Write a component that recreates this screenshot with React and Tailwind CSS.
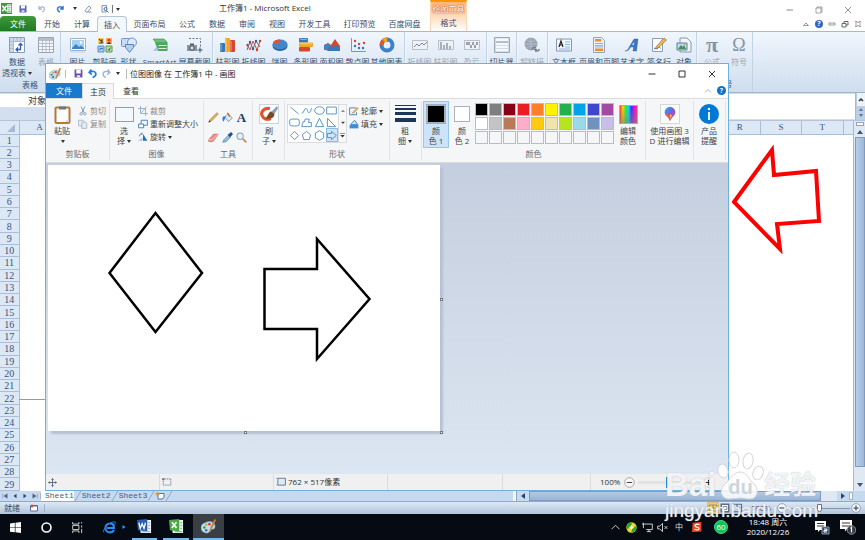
import React from 'react';

const rows = Array.from({ length: 29 }, (_, i) => i + 1);

const excelTabs = [
  { name: '开始', width: 'w-[30px]' },
  { name: '计算', width: 'w-[30px]' },
  { name: '插入', width: 'w-[30px]', active: true },
  { name: '页面布局', width: 'w-[45px]' },
  { name: '公式', width: 'w-[30px]' },
  { name: '数据', width: 'w-[30px]' },
  { name: '审阅', width: 'w-[30px]' },
  { name: '视图', width: 'w-[30px]' },
  { name: '开发工具', width: 'w-[45px]' },
  { name: '打印预览', width: 'w-[45px]' },
  { name: '百度网盘', width: 'w-[45px]' }
];

const palette = [
  'bg-black', 'bg-[#7f7f7f]', 'bg-[#880015]', 'bg-[#ed1c24]', 'bg-[#ff7f27]',
  'bg-[#fff200]', 'bg-[#22b14c]', 'bg-[#00a2e8]', 'bg-[#3f48cc]', 'bg-[#a349a4]',
  'bg-white', 'bg-[#c3c3c3]', 'bg-[#b97a57]', 'bg-[#ffaec9]', 'bg-[#ffc90e]',
  'bg-[#efe4b0]', 'bg-[#b5e61d]', 'bg-[#99d9ea]', 'bg-[#7092be]', 'bg-[#c8bfe7]',
  'bg-[#f5f6f7]', 'bg-[#f5f6f7]', 'bg-[#f5f6f7]', 'bg-[#f5f6f7]', 'bg-[#f5f6f7]',
  'bg-[#f5f6f7]', 'bg-[#f5f6f7]', 'bg-[#f5f6f7]', 'bg-[#f5f6f7]', 'bg-[#f5f6f7]'
];

const Icon = ({ children, className = 'w-4 h-4', box = '0 0 16 16' }) => (
  <svg viewBox={box} className={`${className} shrink-0`} fill="none" aria-hidden="true">
    {children}
  </svg>
);

const Caret = () => (
  <svg viewBox="0 0 4 3" className="inline-block w-1 h-[3px] ml-0.5 align-middle" aria-hidden="true">
    <path d="M0 0h4L2 3z" fill="#333" />
  </svg>
);

/* ---------- Excel ribbon icons ---------- */

const icons = {
  pivot: (
    <>
      <path d="M.5 .5h15v15H.5z" fill="#fff" stroke="#8a9bb5" />
      <path d="M1 1h14v3H1zM1 4h3v11H1z" fill="#c9d9ee" />
      <path d="M1 4.500h14M4.500 1v14M8 1v3M11.500 1v3M1 8h3M1 11.500h3" stroke="#a9b9d0" />
      <path d="M7 12.500h4.500V7M9 10.500l-2 2 2 2M9.500 8.500l2-2 2 2" stroke="#2f5fae" strokeWidth="1.300" />
    </>
  ),
  table: (
    <>
      <path d="M.5 .5h15v15H.5z" fill="#f6f8fb" stroke="#9aa5b3" />
      <path d="M1 1h14v3H1z" fill="#b4bdc8" />
      <path d="M1 6.500h14M1 9.500h14M1 12.500h14M4.500 1v14M8 1v14M11.500 1v14" stroke="#b4bdc9" />
    </>
  ),
  picture: (
    <>
      <path d="M.5 1.500h15v12H.5z" fill="#fff" stroke="#9fb1c9" />
      <path d="M2 3h12v9H2z" fill="#a5d0f5" />
      <circle cx="11" cy="5.500" r="1.200" fill="#fff" />
      <path d="M2 11l4-4 3 3 2-1.500 3 2.500v1H2z" fill="#3f7fc4" />
      <path d="M.5 15h15" stroke="#c6d2e0" />
    </>
  ),
  clipart: (
    <>
      <path d="M1 1h6v6H1z" fill="#ffd05c" />
      <path d="M2 2l4 4M5 2v4H2" stroke="#5b4a2a" strokeWidth="1.200" />
      <path d="M9 1h6v6H9z" fill="#f9b04a" />
      <circle cx="12" cy="3.200" r="1.400" fill="#d6382c" />
      <path d="M10 7a2 2 0 014 0z" fill="#7b2b1f" />
      <path d="M1 9h6v6H1z" fill="#a7cbf0" stroke="#5b89bd" />
      <path d="M9 9h6v6H9z" fill="#b9dfa0" stroke="#5e9c4a" />
      <path d="M2.500 13l1.500-2 2 1M11 12l1 1.500 1.500-3" stroke="#2e6496" />
    </>
  ),
  shapes: (
    <>
      <rect x=".5" y="1.500" width="9" height="8" rx="1" fill="#c7dcf4" stroke="#6b97cc" />
      <circle cx="11" cy="5.500" r="4.500" fill="#dbe9f8" stroke="#6b97cc" />
      <path d="M4.500 7.500h8v3l-4 5-4-5z" fill="#b4cfee" stroke="#5c88bd" />
    </>
  ),
  smartart: (
    <>
      <path d="M1 2h11l3 3v1H4z" fill="#6bbf6d" stroke="#3f9150" strokeWidth=".6" />
      <path d="M3 5.500h12.500v8.500H6z" fill="#4ea660" />
      <path d="M6.500 8h8v1h-8zM6.500 11h8v1h-8z" fill="#d6efd6" />
      <path d="M1 14l4-5 1 5z" fill="#a8c9e6" />
    </>
  ),
  screenshot: (
    <>
      <path d="M2 1.500h11.500v9" stroke="#69788c" strokeDasharray="2 1.500" />
      <path d="M0 8h10v6H0z" fill="#8d949d" />
      <path d="M3 6.500h4V8H3z" fill="#555d68" />
      <circle cx="5" cy="11" r="2.200" fill="#dce2ea" stroke="#3f4650" />
      <path d="M13 10.500v5M10.500 13h5" stroke="#3e4e63" />
    </>
  ),
  bars: (
    <>
      <rect x="0" y="6" width="5" height="9" rx="1" fill="#3478bd" />
      <rect x="5" y="1" width="5" height="14" rx="1" fill="#f3a51f" />
      <rect x="10" y="3" width="5" height="12" rx="1" fill="#d6482c" />
      <path d="M1 7v7M6 2v12M11 4v10" stroke="#fff" strokeOpacity=".5" />
    </>
  ),
  lines: (
    <>
      <path d="M1 13l3-8 3 7 3-8 4 6" stroke="#3b70ae" />
      <path d="M1 8l3 5 3-9 4 9 3-9" stroke="#d6513b" />
      <g fill="#2c5f9f"><circle cx="4" cy="5" r="1.200" /><circle cx="7" cy="12" r="1.200" /><circle cx="10" cy="4" r="1.200" /></g>
      <g fill="#cf3b23"><circle cx="1.500" cy="8" r="1.200" /><circle cx="11" cy="13" r="1.200" /><circle cx="14" cy="4" r="1.200" /></g>
    </>
  ),
  pie: (
    <>
      <ellipse cx="8" cy="9" rx="7.500" ry="5" fill="#245a9b" />
      <ellipse cx="8" cy="7.500" rx="7.500" ry="5" fill="#4186cb" />
      <path d="M8 7.500L1 5.500C2 3 5.500 2.300 8 2.500z" fill="#e4512e" />
    </>
  ),
  hbars: (
    <>
      <rect x="1" y="1" width="9" height="4.500" rx="1" fill="#3478bd" />
      <rect x="1" y="5.500" width="14" height="4.500" rx="1" fill="#f3a51f" />
      <rect x="1" y="10" width="11" height="4.500" rx="1" fill="#d6482c" />
      <path d="M2 2.300h7M2 6.800h12" stroke="#fff" strokeOpacity=".5" />
    </>
  ),
  area: (
    <>
      <path d="M0 13V8l4-2 3 2 4-6 5 7v5z" fill="#d6482c" />
      <path d="M3 14l3-5 3 1 3-2 4 4v2z" fill="#3478bd" />
      <path d="M0 9l4-3 2 3-3 4H0z" fill="#3f86c9" />
    </>
  ),
  scatter: (
    <>
      <path d="M1.500 1v13.500H16" stroke="#7f94ae" />
      <g fill="#d6482c"><circle cx="5" cy="4" r="1.200" /><circle cx="9" cy="7" r="1.200" /><circle cx="14" cy="6" r="1.200" /></g>
      <g fill="#3470b5"><circle cx="5" cy="9" r="1.200" /><circle cx="9" cy="11" r="1.200" /><circle cx="13" cy="11" r="1.200" /></g>
    </>
  ),
  donut: (
    <>
      <circle cx="8" cy="8" r="5.500" stroke="#3c82c8" strokeWidth="4" />
      <path d="M8 2.500A5.500 5.500 0 002.500 8" stroke="#e2552f" strokeWidth="4" />
      <path d="M8 2.500A5.500 5.500 0 004.500 3.700" stroke="#f3a51f" strokeWidth="4" />
    </>
  ),
  sparkLine: (
    <>
      <path d="M.5 3.500h15v9H.5z" fill="#eef1f5" stroke="#b6bfca" />
      <path d="M2 10l3-3 2 2 3-3 2 2 3-3" stroke="#7c8794" />
    </>
  ),
  sparkCol: (
    <>
      <path d="M.5 3.500h15v9H.5z" fill="#eef1f5" stroke="#b6bfca" />
      <path d="M3 12V5M6 12V8M9 12V6M12 12V9" stroke="#8f99a6" strokeWidth="1.500" />
    </>
  ),
  sparkWin: (
    <>
      <path d="M.5 3.500h15v9H.5z" fill="#eef1f5" stroke="#b6bfca" />
      <path d="M3 8V5M5 8V5M7 11V8M9 8V5M11 11V8M13 8V5" stroke="#7c8794" strokeWidth="1.500" />
    </>
  ),
  slicer: (
    <>
      <path d="M.5 .5h15v15H.5z" fill="#d3dbe6" stroke="#9ca8b8" />
      <path d="M2 1.500h12v3H2zM2 6h12v2H2zM2 9h12v2H2zM2 12h12v2H2z" fill="#f6f8fb" />
      <path d="M2 5h12" stroke="#8b9cb5" />
    </>
  ),
  link: (
    <>
      <circle cx="7" cy="7" r="6.500" fill="#9aa4b3" />
      <path d="M1 7h12M7 1v12M3 3c2 2 6 2 8 0M3 11c2-2 6-2 8 0" stroke="#b7c0cc" strokeWidth=".8" />
      <path d="M8 12.500a2 2 0 012-2h2M15 12a2 2 0 01-2 2h-2M10 12.500h3" stroke="#78828f" strokeWidth="1.500" />
    </>
  ),
  textbox: (
    <>
      <path d="M.5 2h15v12H.5z" fill="#f4f8fd" stroke="#8496b0" />
      <path d="M3 10l2-6 2 6M3.700 8h2.600" stroke="#222" strokeWidth="1.200" />
      <path d="M9 5h5M9 7.500h5M9 10h5M3 12h11" stroke="#8cb0dd" />
    </>
  ),
  header: (
    <>
      <path d="M2.500 .5h8l3 3v12h-11z" fill="#eef3fa" stroke="#93a3b8" />
      <path d="M4 2h6v2.500H4zM4 11.500h8V14H4z" fill="#ee8b2b" />
      <path d="M4 6.500h8M4 8.500h8M4 10h8" stroke="#8cb0dd" />
    </>
  ),
  wordart: (
    <path d="M1 14c2 0 3-1.500 4.500-4.500L10 2h4l-1.500 12H9l.6-4H6.500c-1.500 3-3 4.500-5.500 4zM7.500 8.300H10l.6-4.300z" fill="#3977c6" stroke="#2a5a9f" strokeWidth=".4" />
  ),
  signature: (
    <>
      <path d="M1.500 1.500h10v13h-10z" fill="#f8fafd" stroke="#8f9db0" />
      <path d="M3 12c2-2 2 1 4-1s2 1 3 0" stroke="#5b83bb" />
      <path d="M5 10l8-9 2.500 2L7 11l-2.500 1z" fill="#f0b94d" stroke="#7b5b23" strokeWidth=".6" />
    </>
  ),
  object: (
    <>
      <path d="M4 1h7l4 4v10H4z" fill="#f1f5fa" stroke="#8797ac" />
      <path d="M1 6h10v7H1z" fill="#bcdcf5" stroke="#5a7ca5" />
      <path d="M2 12l3-4 2 2 1-2 2 4z" fill="#44924d" />
      <circle cx="8.500" cy="7.500" r="1" fill="#f0a22b" />
    </>
  )
};

const Tool = ({ icon, label, width, dim }) => (
  <button className={`${width} flex flex-col items-center shrink-0 whitespace-nowrap leading-[11px] ${dim ? 'text-[#9aa4b2]' : 'text-[#38526f]'}`}>
    <Icon>{icons[icon]}</Icon>
    <span className="mt-[3px]">{label}</span>
  </button>
);

const RibbonGroup = ({ width, children }) => (
  <div className={`${width} shrink-0 flex justify-center pt-[5px] border-r border-[#c3d3e6] shadow-[1px_0_0_#f1f7fd]`}>
    {children}
  </div>
);

const ExcelTitle = () => (
  <div className="h-4 flex items-center relative">
    <div className="flex items-center gap-[7px] pl-px pt-px">
      <Icon className="w-[11px] h-[11px]">
        <path d="M0 0h16v16H0z" fill="#3a9a3f" />
        <path d="M9 2h6v12H9z" fill="#fff" />
        <path d="M2 4l6 8M8 4l-6 8" stroke="#fff" strokeWidth="2" />
        <path d="M10 4h4M10 7h4M10 10h4M10 12.500h4" stroke="#3a9a3f" />
      </Icon>
      <Icon className="w-2 h-2">
        <path d="M1 1h14v14H1z" fill="#5660b5" />
        <path d="M4 1h8v6H4z" fill="#fff" />
        <path d="M5 10h6v5H5z" fill="#c8d0ee" />
      </Icon>
      <Icon className="w-2 h-2 ml-1">
        <path d="M3 7c3-5 10-4 10 1 0 3-2 5-5 6M2 2v6h6" stroke="#a8b6cc" strokeWidth="2.500" />
      </Icon>
      <Icon className="w-2 h-2 ml-[3px]">
        <path d="M13 7C10 2 3 3 3 8c0 3 2 5 5 6M14 2v6H8" stroke="#3477cf" strokeWidth="3" />
      </Icon>
      <Caret />
      <Icon className="w-2 h-2">
        <path d="M2 11l8-9 4 4-7 8H4zM7 14h8" stroke="#5b7598" strokeWidth="1.500" />
      </Icon>
      <Icon className="w-2 h-2 ml-0.5">
        <path d="M2 1h9v13H2z" stroke="#60738f" strokeWidth="1.500" />
        <circle cx="9" cy="8" r="3" fill="#fff" stroke="#3a6cae" strokeWidth="2" />
        <path d="M11 11l4 4" stroke="#60738f" strokeWidth="2" />
      </Icon>
      <span className="-ml-1 border-l border-[#777] pl-px leading-[8px]"><Caret /></span>
    </div>
    <h1 className="absolute left-[219px] top-[2px] text-[#333]">工作簿1 - Microsoft Excel</h1>
    <div className="ml-auto flex items-center gap-[21px] pr-[13px] pt-[3px]">
      <button aria-label="最小化"><Icon className="w-2 h-2"><path d="M1 8h13" stroke="#888" strokeWidth="2" /></Icon></button>
      <button aria-label="还原"><Icon className="w-2 h-2"><path d="M2 4h10v10H2zM4 4V2h10v10h-2" stroke="#888" strokeWidth="1.500" /></Icon></button>
      <button aria-label="关闭"><Icon className="w-2 h-2"><path d="M2 2l12 12M14 2L2 14" stroke="#888" strokeWidth="1.800" /></Icon></button>
    </div>
  </div>
);

const ExcelTabs = () => (
  <div className="h-[15px] flex text-[#3b4d66] relative">
    <button className="w-9 rounded-t-sm bg-linear-to-b from-[#3f9a3a] to-[#1d7a25] text-white mr-px">文件</button>
    {excelTabs.map((tab) => (
      <button
        key={tab.name}
        className={`${tab.width} shrink-0 whitespace-nowrap ${tab.active ? 'bg-[#f4f8fd] border border-b-0 border-[#b4c6dc] rounded-t-sm h-4 z-10' : ''}`}
      >
        {tab.name}
      </button>
    ))}
    <div className="absolute left-[430px] -top-4 w-[37px] h-[31px] flex flex-col items-center bg-linear-to-b from-[#ffb878] to-white border-t-2 border-x border-t-[#ff9400] border-x-[#ffd9b5]">
      <span className="leading-[13px] text-white [text-shadow:0_0_1px_#c9531a,0_0_1px_#c9531a,0_0_2px_#d9641f]">绘图工具</span>
      <button className="leading-[16px]">格式</button>
    </div>
    <div className="ml-auto flex items-center gap-[5px] pr-[3px]">
      <button aria-label="折叠功能区"><Icon className="w-2 h-2"><path d="M3 11l5-5 5 5z" stroke="#777" strokeWidth="1.500" /></Icon></button>
      <button aria-label="帮助" className="w-2 h-2 rounded-full bg-[#2f68c0] text-white text-[7px] leading-[8px] font-bold">?</button>
      <button aria-label="最小化"><Icon className="w-2 h-2"><path d="M2 6h12v4H2z" stroke="#777" strokeWidth="1.500" /></Icon></button>
      <button aria-label="还原"><Icon className="w-2 h-2"><path d="M2 7h8v7H2zM6 7V3h8v7h-4" stroke="#666" strokeWidth="2" /></Icon></button>
      <button aria-label="关闭"><Icon className="w-2 h-2"><path d="M2 3h4l2 3 2-3h4M2 13h4l2-3 2 3h4M4 3v10M12 3v10" stroke="#777" strokeWidth="1.300" /></Icon></button>
    </div>
  </div>
);

const ExcelRibbon = () => (
  <div className="h-[62px] flex border-t border-[#a9b9cc] border-b border-b-[#9fb3cb] bg-linear-to-b from-[#f0f6fd] via-[#dfeaf6] to-[#cfdded]">
    <div className="w-[61px] shrink-0 flex flex-col pt-[5px] border-r border-[#c3d3e6] text-[#38526f]">
      <div className="flex h-[40px]">
        <Tool icon="pivot" width="w-[34px]" label={<>数据<br />透视表<Caret /></>} />
        <Tool icon="table" width="w-6" label="表格" dim />
      </div>
      <span className="text-center leading-[16px]">表格</span>
    </div>
    <RibbonGroup width="w-[152px]">
      <Tool icon="picture" width="w-[30px]" label="图片" />
      <Tool icon="clipart" width="w-6" label="剪贴画" />
      <Tool icon="shapes" width="w-6" label="形状" />
      <Tool icon="smartart" width="w-[38px]" label="SmartArt" />
      <Tool icon="screenshot" width="w-8" label="屏幕截图" />
    </RibbonGroup>
    <RibbonGroup width="w-[192px]">
      <Tool icon="bars" width="w-7" label="柱形图" />
      <Tool icon="lines" width="w-6" label="折线图" />
      <Tool icon="pie" width="w-7" label="饼图" />
      <Tool icon="hbars" width="w-6" label="条形图" />
      <Tool icon="area" width="w-7" label="面积图" />
      <Tool icon="scatter" width="w-6" label="散点图" />
      <Tool icon="donut" width="w-[34px]" label="其他图表" />
    </RibbonGroup>
    <RibbonGroup width="w-[82px]">
      <Tool icon="sparkLine" width="w-[26px]" label="折线图" dim />
      <Tool icon="sparkCol" width="w-[26px]" label="柱形图" dim />
      <Tool icon="sparkWin" width="w-[26px]" label="盈亏" dim />
    </RibbonGroup>
    <RibbonGroup width="w-[30px]">
      <Tool icon="slicer" width="w-7" label="切片器" />
    </RibbonGroup>
    <RibbonGroup width="w-[31px]">
      <Tool icon="link" width="w-7" label="超链接" dim />
    </RibbonGroup>
    <RibbonGroup width="w-[149px]">
      <Tool icon="textbox" width="w-7" label="文本框" />
      <Tool icon="header" width="w-[42px]" label="页眉和页脚" />
      <Tool icon="wordart" width="w-6" label="艺术字" />
      <Tool icon="signature" width="w-[30px]" label="签名行" />
      <Tool icon="object" width="w-5" label="对象" />
    </RibbonGroup>
    <div className="w-[56px] shrink-0 flex flex-col pt-[5px] border-r border-[#c3d3e6] text-[#9aa4b2]">
      <div className="flex h-[40px] leading-[11px]">
        <button className="w-[30px] flex flex-col items-center">
          <span className="font-['Liberation_Serif',serif] font-bold text-[22px] leading-[16px] text-[#8793a4]">π</span>
          <span className="mt-[3px]">公式</span>
        </button>
        <button className="w-6 flex flex-col items-center">
          <span className="font-['Liberation_Serif',serif] text-[18px] leading-[16px] text-[#8793a4]">Ω</span>
          <span className="mt-[3px]">符号</span>
        </button>
      </div>
      <span className="text-center leading-[16px] text-[#38526f]">符号</span>
    </div>
  </div>
);

const FormulaBar = () => (
  <div className="h-7 flex bg-[#d3dfee] border-b border-[#b5c5d9]">
    <input
      aria-label="名称框"
      defaultValue="对象"
      className="w-[90px] h-[13px] mt-px pl-7 bg-white text-[9px] leading-[13px] text-[#333] outline-none"
    />
    <input aria-label="编辑栏" className="flex-1 min-w-0 h-[25px] ml-10 mt-px bg-white outline-none" />
    <div className="w-[10px] flex flex-col items-center bg-[#bccee3] border-l border-[#a5b9d2]">
      <Icon className="w-2 h-[13px] bg-[#edf3fa]" box="0 0 8 13"><path d="M2 8l2-2 2 2" stroke="#333" strokeWidth="1.500" /></Icon>
      <Icon className="w-2 h-[13px]" box="0 0 8 13"><path d="M2 5l2-3 2 3zM2 8l2 3 2-3z" fill="#5c7799" /></Icon>
    </div>
  </div>
);

const ColumnHead = ({ children, span = 1 }) => (
  <th colSpan={span} className="p-0 font-normal border-r border-b border-[#a9bfd9]">{children}</th>
);

const Sheet = () => (
  <div className="flex-1 min-h-0 flex bg-white">
    <table className="flex-1 table-fixed h-full w-full border-collapse font-['Liberation_Serif',serif] text-[9px] leading-[9px] text-[#3a5578]">
      <thead>
        <tr className="h-[13px] bg-[#dce8f5]">
          <th className="w-[19px] p-0 border-r border-b border-[#a9bfd9]">
            <Icon className="w-3 h-[11px] ml-[5px]" box="0 0 12 11"><path d="M10 2v8H2z" fill="#a9bbd2" /></Icon>
          </th>
          <ColumnHead>A</ColumnHead>
          {/* B to Q lie under the Paint window */}
          <ColumnHead span={16} />
          <ColumnHead>R</ColumnHead>
          <ColumnHead>S</ColumnHead>
          <ColumnHead>T</ColumnHead>
          <th className="w-[10px] p-0 border-b border-[#a9bfd9]" />
        </tr>
      </thead>
      <tbody>
        {rows.map((r) => (
          <tr key={r}>
            <th className="p-0 font-normal text-[10px] border-r border-b border-[#a9bfd9] bg-[#dce8f5]">{r}</th>
            <td className="p-0" colSpan={21} />
          </tr>
        ))}
      </tbody>
    </table>
    <div className="w-3 shrink-0 flex flex-col items-center bg-[#dfe8f3] border-l border-[#a5b9d2]">
      <span className="w-2 h-1 mt-px bg-white border border-[#8fa4bd]" />
      <Icon className="w-2 h-[11px]" box="0 0 8 11"><path d="M1 8l3-4 3 4z" fill="#3d5878" /></Icon>
      <span className="flex-1 w-[10px] bg-linear-to-r from-[#b9cee6] to-[#9db8d8] border border-[#7f9cc0]" />
      <Icon className="w-2 h-6" box="0 0 8 24"><path d="M1 16l3 4 3-4z" fill="#3d5878" /></Icon>
    </div>
  </div>
);

const TabEdge = () => (
  <Icon className="w-2 h-[10px]" box="0 0 8 10"><path d="M1 10l6-10" stroke="#8fa6c4" /></Icon>
);

const SheetBar = () => (
  <div className="h-[10px] flex items-center bg-[#c6d9ee] font-['Liberation_Mono','Noto_Sans_CJK_SC',monospace] text-[8px] leading-[10px] text-[#4a5f7c]">
    <div className="w-[41px] flex justify-around border-r border-[#9fb5d0]">
      <Icon className="w-1.5 h-1.5"><path d="M2 2v12M14 2v12L5 8z" fill="#4a6388" stroke="#4a6388" /></Icon>
      <Icon className="w-1.5 h-1.5"><path d="M12 2v12L4 8z" fill="#2d4568" /></Icon>
      <Icon className="w-1.5 h-1.5"><path d="M4 2v12l8-6z" fill="#2d4568" /></Icon>
      <Icon className="w-1.5 h-1.5"><path d="M14 2v12M2 2v12l9-6z" fill="#4a6388" stroke="#4a6388" /></Icon>
    </div>
    <button className="bg-white pl-1">Sheet1</button>
    <TabEdge />
    <button>Sheet2</button>
    <TabEdge />
    <button>Sheet3</button>
    <TabEdge />
    <button aria-label="插入工作表">
      <Icon className="w-[10px] h-2" box="0 0 20 16"><path d="M6 3h12v8l-4 3H6z" fill="#fff" stroke="#4f70a0" strokeWidth="2" /><path d="M1 4h8M5 0v8" stroke="#e88f28" strokeWidth="3" /></Icon>
    </button>
    <TabEdge />
    <div className="ml-auto flex items-center w-[352px] h-full">
      <span className="w-1 h-full bg-[#f2f5f9] border-r border-[#8fa6c4]" />
      <Icon className="w-3 h-[10px] bg-[#c9daee]" box="0 0 12 10"><path d="M8 2v6L4 5z" fill="#2d4568" /></Icon>
      <span className="flex-1 h-full bg-linear-to-b from-[#b4c9e3] to-[#99b4d5] border border-[#7f9cc0]" />
      <span className="w-4 h-full bg-[#dfe8f3]" />
      <Icon className="w-3 h-[10px]" box="0 0 12 10"><path d="M4 2v6l4-3z" fill="#2d4568" /></Icon>
      <span className="w-1 h-2 mr-3 bg-white border border-[#9fb5d0]" />
    </div>
  </div>
);

const ExcelStatus = () => (
  <div className="h-[13px] flex items-center pl-1 pr-1 border-t border-[#8fa9c8] bg-linear-to-b from-[#dce8f6] to-[#b3c5da] text-[#3a4f6b]">
    <span>就绪</span>
    <Icon className="w-2 h-2 ml-2.5"><path d="M1 3h14v11H1z" fill="#fff" stroke="#51709b" strokeWidth="2" /><circle cx="4" cy="4" r="3" fill="#d5502e" /><path d="M7 4h8" stroke="#51709b" strokeWidth="2" /></Icon>
    <span className="ml-1.5 h-2 border-l border-[#9fb2c8]" />
    <div className="ml-auto flex items-center">
      <Icon className="w-3 h-3"><path d="M1 1h14v14H1z" fill="#ffd766" stroke="#d9a02c" /><path d="M3 4h10v8H3zM3 8h10M8 4v8" stroke="#5c6f88" /></Icon>
      <Icon className="w-3 h-3"><path d="M3 3h10v10H3z" fill="#fff" stroke="#5c6f88" strokeWidth="2" /><path d="M5.500 6h5v4h-5z" stroke="#5c6f88" /></Icon>
      <Icon className="w-3 h-3 mr-2"><path d="M2 3h12v10H2zM8 3v5M5 8h6v5" stroke="#5c6f88" strokeWidth="1.500" /></Icon>
      <span>100%</span>
      <button aria-label="缩小" className="ml-1.5"><Icon className="w-[10px] h-[10px]"><circle cx="8" cy="8" r="7" fill="#f4f7fb" stroke="#6f829b" /><path d="M4 8h8" stroke="#44566e" strokeWidth="2" /></Icon></button>
      <input
        type="range"
        aria-label="显示比例"
        defaultValue="50"
        className="w-[62px] h-[9px] mx-px appearance-none bg-transparent [&::-webkit-slider-runnable-track]:h-px [&::-webkit-slider-runnable-track]:bg-[#8296b0] [&::-webkit-slider-thumb]:appearance-none [&::-webkit-slider-thumb]:w-[5px] [&::-webkit-slider-thumb]:h-[8px] [&::-webkit-slider-thumb]:-mt-1 [&::-webkit-slider-thumb]:bg-white [&::-webkit-slider-thumb]:border [&::-webkit-slider-thumb]:border-[#62748d] [&::-webkit-slider-thumb]:rounded-b-sm"
      />
      <button aria-label="放大"><Icon className="w-[10px] h-[10px]"><circle cx="8" cy="8" r="7" fill="#f4f7fb" stroke="#6f829b" /><path d="M4 8h8M8 4v8" stroke="#44566e" strokeWidth="2" /></Icon></button>
    </div>
  </div>
);

/* ---------- Paint window ---------- */

const PaintGroup = ({ width, label, children }) => (
  <section className={`${width} shrink-0 flex flex-col border-r border-[#e1e3e6]`}>
    <div className="flex h-[49px]">{children}</div>
    <span className="text-center leading-[12px] text-[#6a6a6a]">{label}</span>
  </section>
);

const BigButton = ({ width, icon, children }) => (
  <button className={`${width} shrink-0 flex flex-col items-center pt-[3px] leading-[10px] whitespace-nowrap`}>
    <span className="h-5 mb-0.5 flex items-center">{icon}</span>
    {children}
  </button>
);

const SmallButton = ({ icon, dim, children }) => (
  <button className={`h-[13px] flex items-center gap-0.5 whitespace-nowrap ${dim ? 'text-[#8b8b8b]' : ''}`}>
    <Icon className="w-[10px] h-[10px]">{icon}</Icon>
    <span>{children}</span>
  </button>
);

const PaletteIcon = ({ className }) => (
  <Icon className={className}>
    <path d="M7 3c4-1 8 1 8 5 0 3-3 3-4 3s-1 3-4 4c-4 0-7-2-7-6 0-3 3-5 7-6z" fill="#c5dcee" stroke="#6f9dc4" strokeWidth=".6" />
    <circle cx="3.500" cy="9" r="1.400" fill="#3c9b47" />
    <circle cx="5.500" cy="6" r="1.400" fill="#e5a62b" />
    <circle cx="9" cy="5.500" r="1.400" fill="#d5442c" />
    <circle cx="5.500" cy="12" r="1.400" fill="#356fc2" />
    <path d="M14.500 0l1.500 1-4 8-2 5-1-.5 1.500-5z" fill="#d98a35" stroke="#865321" strokeWidth=".3" />
  </Icon>
);

const PaintTitle = () => (
  <div className="h-[19px] flex items-center pl-[3px]">
    <PaletteIcon className="w-3 h-3" />
    <span className="mx-1 h-2 border-l border-[#bbb]" />
    <Icon className="w-[9px] h-[9px] ml-1"><path d="M1 1h14v14H1z" fill="#6b4fa5" /><path d="M4 1h8v7H4z" fill="#fff" /><path d="M5 11h6v4H5z" fill="#e5ddf5" /></Icon>
    <Icon className="w-[9px] h-[9px] ml-[5px]"><path d="M3 6c4-3 11-2 11 3 0 3-3 5-6 6M6 1L2 6l5 4" stroke="#1e7fdc" strokeWidth="3" /></Icon>
    <Icon className="w-[9px] h-[9px] ml-[5px]"><path d="M13 6C9 3 2 4 2 9c0 3 2 5 5 6M10 1l4 5-5 4" stroke="#a3b5cc" strokeWidth="2.500" /></Icon>
    <span className="ml-[3px] flex"><Caret /></span>
    <span className="ml-1.5 mr-[3px] h-2.5 border-l border-[#bbb]" />
    <h2 className="text-[#222]">位图图像 在 工作簿1 中 - 画图</h2>
    <div className="ml-auto flex gap-[22px] pr-3">
      <button aria-label="最小化"><Icon className="w-2 h-2"><path d="M1 8h14" stroke="#333" strokeWidth="2" /></Icon></button>
      <button aria-label="最大化"><Icon className="w-2 h-2"><path d="M2 2h12v12H2z" stroke="#333" strokeWidth="2" /></Icon></button>
      <button aria-label="关闭"><Icon className="w-2 h-2"><path d="M2 2l12 12M14 2L2 14" stroke="#333" strokeWidth="2" /></Icon></button>
    </div>
  </div>
);

const shapeGlyphs = [
  <path d="M2 3l12 10" />,
  <path d="M1 12C5 12 4 5 7 5s2 7 5 6 2-6 4-7" />,
  <ellipse cx="8" cy="8" rx="7" ry="5.500" />,
  <path d="M1 3h14v10H1z" />,
  <rect x="1" y="3" width="14" height="10" rx="3" />,
  <path d="M1 14l2-7h2l1-4h6l-1 5h4v6z" />,
  <path d="M8 2l6 12H2z" />,
  <path d="M2 2v12h12z" />,
  <path d="M8 2l6 6-6 6-6-6z" />,
  <path d="M8 2l6 5-2 7H4L2 7z" />,
  <path d="M8 1l6 3.500v7L8 15l-6-3.500v-7z" />,
  <path d="M2 5h6V2l7 6-7 6v-3H2z" />
];

const PaintRibbon = () => (
  <div className="h-[65px] shrink-0 flex pt-[2px] pb-0.5 bg-[#f5f6f7] border-y border-[#dadbdc] text-[#444]">
    <PaintGroup width="w-16" label="剪贴板">
      <BigButton
        width="w-8"
        icon={
          <Icon className="w-[17px] h-[19px]" box="0 0 17 19">
            <rect x="1.500" y="2.500" width="14" height="15.500" rx="1" fill="#fdfdfe" stroke="#b07b3c" strokeWidth="2" />
            <path d="M5 1.500h7v3H5z" fill="#6d7682" />
            <path d="M11 17l4-4v4z" fill="#ccd4de" />
          </Icon>
        }
      >
        <span>粘贴</span>
        <span><Caret /></span>
      </BigButton>
      <div className="pt-[3px]">
        <SmallButton dim icon={<><path d="M5 1l5 10M11 1L6 11" stroke="#7d9cc0" strokeWidth="1.600" /><circle cx="5" cy="12.500" r="2" stroke="#94a9c2" strokeWidth="1.600" /><circle cx="11" cy="12.500" r="2" stroke="#94a9c2" strokeWidth="1.600" /></>}>剪切</SmallButton>
        <SmallButton dim icon={<><path d="M1 2h7l2 2v7H1z" fill="#eef2f7" stroke="#a9b8ca" strokeWidth="1.500" /><path d="M6 5h6l2 2v8H6z" fill="#e3eaf3" stroke="#a9b8ca" strokeWidth="1.500" /></>}>复制</SmallButton>
      </div>
    </PaintGroup>

    <PaintGroup width="w-[94px]" label="图像">
      <BigButton
        width="w-7"
        icon={<span className="w-[19px] h-[15px] bg-[#f3f8fd] border border-[#7fa3c4]" />}
      >
        <span>选</span>
        <span>择<Caret /></span>
      </BigButton>
      <div className="pt-[3px]">
        <SmallButton dim icon={<path d="M4 0v12h12M0 4h12v12M5 11L14 1" stroke="#9db3ca" strokeWidth="1.600" />}>裁剪</SmallButton>
        <SmallButton icon={<><path d="M5 2h10v8H5z" fill="#f4f9fe" stroke="#3d83bf" strokeWidth="1.500" /><path d="M1 8h8v6H1z" fill="#fff" stroke="#3d83bf" strokeWidth="1.500" /></>}>重新调整大小</SmallButton>
        <SmallButton icon={<><path d="M8 14V3l7 11z" fill="#2372b9" /><path d="M0 14l7-5v5z" fill="#9cc4e6" /><path d="M2 7c0-3 2-4 5-4M5 1l2 2-2 2" stroke="#3d83bf" strokeWidth="1.400" /></>}>旋转<Caret /></SmallButton>
      </div>
    </PaintGroup>

    <PaintGroup width="w-[49px]" label="工具">
      <div className="grid grid-cols-3 gap-x-[3px] gap-y-2 pl-1 pt-2.5 h-[42px]">
        <button aria-label="铅笔"><Icon className="w-[11px] h-[11px]"><path d="M1 15l2-4L13 1l2 2-10 10z" fill="#e2b45b" stroke="#8b6a30" strokeWidth=".8" /><path d="M1 15l1-3 2 2z" fill="#333" /></Icon></button>
        <button aria-label="填充"><Icon className="w-[11px] h-[11px]"><path d="M4 7l5-5 6 7-6 5z" fill="#dfe9f3" stroke="#6a8097" /><path d="M3 6c-3 1-3 5-1 8 2-2 2-5 4-7z" fill="#2f85cf" /><path d="M8 1l3 6" stroke="#c96a35" strokeWidth="2" /></Icon></button>
        <button aria-label="文本" className="font-['Liberation_Serif',serif] font-bold text-[13px] leading-[11px] text-[#1f3e66]">A</button>
        <button aria-label="橡皮擦"><Icon className="w-[11px] h-[11px]"><path d="M1 11l7-8h7l-6 9-2 2H1z" fill="#ef8f8b" stroke="#c8645f" strokeWidth=".8" /><path d="M1 11h6l8-8" stroke="#fbd0ce" /></Icon></button>
        <button aria-label="颜色选取器"><Icon className="w-[11px] h-[11px]"><path d="M1 15l2-4 6-6 3 3-6 6z" fill="#8fc0e8" stroke="#416c96" strokeWidth=".8" /><path d="M8 4l2-1 3-3 3 3-3 3-1 2z" fill="#214f80" /></Icon></button>
        <button aria-label="放大镜"><Icon className="w-[11px] h-[11px]"><circle cx="6" cy="6" r="4.500" fill="#e6f1fa" stroke="#8aa2b9" strokeWidth="1.500" /><path d="M10 10l5 5" stroke="#c98b43" strokeWidth="2.500" /></Icon></button>
      </div>
    </PaintGroup>

    <PaintGroup width="w-8" label="">
      <BigButton
        width="w-8"
        icon={
          <Icon className="w-5 h-5 border border-[#cfd4d9] bg-white" box="0 0 20 20">
            <path d="M11 4C5 3 1 7 2 11s5 6 10 4" stroke="#e2532a" strokeWidth="3.500" />
            <path d="M19 1l-7 7 3 3 5-7z" fill="#8aa0b5" />
            <path d="M12 7c-3 2-3 5-6 8 5 1 10 0 10-5z" fill="#7b4a2a" />
          </Icon>
        }
      >
        <span>刷</span>
        <span>子<Caret /></span>
      </BigButton>
    </PaintGroup>

    <PaintGroup width="w-[105px]" label="形状">
      <div className="flex h-[39px] mt-[3px] ml-0.5 bg-white border border-[#dadbdc]">
        <div className="grid grid-cols-4 w-[50px]">
          {shapeGlyphs.map((glyph, i) => (
            <button
              key={i}
              aria-label={`形状 ${i + 1}`}
              className={`flex items-center justify-center ${i === 11 ? 'bg-[#cde4f9] border border-[#8ebde8]' : ''}`}
            >
              <svg viewBox="0 0 16 16" className="w-[11px] h-[11px] shrink-0" fill="none" stroke="#4b8ac2" strokeWidth="1.300">{glyph}</svg>
            </button>
          ))}
        </div>
        <div className="w-2 flex flex-col justify-around items-center border-l border-[#dadbdc] bg-[#f7f8f9]">
          <Icon className="w-1 h-1"><path d="M0 12l8-9 8 9z" fill="#888" /></Icon>
          <Icon className="w-1 h-1"><path d="M0 3l8 9 8-9z" fill="#444" /></Icon>
          <Icon className="w-[5px] h-[5px]"><path d="M0 1h16" stroke="#333" strokeWidth="2" /><path d="M1 6l7 8 7-8z" fill="#333" /></Icon>
        </div>
      </div>
      <div className="pt-[3px] pl-0.5">
        <SmallButton icon={<><path d="M1 3h10M1 3v11h11v-4" stroke="#3d83bf" strokeWidth="1.500" /><path d="M5 11l8-9 2 2-8 8z" fill="#e2b45b" stroke="#a3742c" strokeWidth=".6" /></>}>轮廓<Caret /></SmallButton>
        <SmallButton icon={<><path d="M3 8l6-6 5 7H4z" fill="#cfe4f6" stroke="#2f76b8" strokeWidth="1.300" /><path d="M1 9h14v6H1z" fill="#3d8ed3" /></>}>填充<Caret /></SmallButton>
      </div>
    </PaintGroup>

    <PaintGroup width="w-8" label="">
      <BigButton
        width="w-[30px]"
        icon={
          <Icon className="w-[21px] h-[18px]" box="0 0 21 18">
            <path d="M0 0h21v1H0zM0 3h21v2H0zM0 7h21v3H0zM0 13h21v4H0z" fill="#1d355a" />
          </Icon>
        }
      >
        <span>粗</span>
        <span>细<Caret /></span>
      </BigButton>
    </PaintGroup>

    <PaintGroup width="w-[224px]" label="颜色">
      <button className="w-[26px] h-[47px] ml-px shrink-0 flex flex-col items-center pt-[2px] leading-[10px] bg-[#cce4fb] border border-[#99c4ee]">
        <span className="w-5 h-5 mb-0.5 bg-black border-2 border-[#a3b0bc]" />
        <span>颜</span>
        <span>色 1</span>
      </button>
      <BigButton width="w-[26px]" icon={<span className="w-4 h-4 bg-white border border-[#adb2b8]" />}>
        <span>颜</span>
        <span>色 2</span>
      </BigButton>
      <div className="grid grid-cols-10 gap-px mt-0.5 h-[41px]">
        {palette.map((color, i) => (
          <button
            key={i}
            aria-label={`色块 ${i + 1}`}
            className={`w-[13px] h-[13px] border border-[#b9bcc0] ${color}`}
          />
        ))}
      </div>
      <BigButton
        width="w-7"
        icon={
          <span className="w-[19px] h-[19px] border border-[#a9adb2] bg-[linear-gradient(to_bottom,transparent,#80808099),linear-gradient(to_right,#f33,#fd0,#3e3,#0df,#33f,#e0e,#f35)]" />
        }
      >
        <span>编辑</span>
        <span>颜色</span>
      </BigButton>
    </PaintGroup>

    <PaintGroup width="w-12" label="">
      <BigButton
        width="w-[47px]"
        icon={
          <Icon className="w-5 h-5 border border-[#d5d8db] bg-[#fbfbfc]" box="0 0 20 20">
            <defs>
              <linearGradient id="drop" x1="0" y1="0" x2="1" y2="1">
                <stop offset="0" stopColor="#18b5f0" />
                <stop offset=".5" stopColor="#7a5be0" />
                <stop offset="1" stopColor="#f04a6b" />
              </linearGradient>
            </defs>
            <path d="M10 2a6 6 0 016 6c0 4-4 5-6 10-1-5-6-6-6-10a6 6 0 016-6z" fill="url(#drop)" />
            <path d="M4.500 10C6 9 8 11 10 11v7c-1-4-4-5-5.500-8z" fill="#f25b4e" />
            <path d="M10 18c0-3 1-5 3-6l-3-2z" fill="#fbb130" />
          </Icon>
        }
      >
        <span>使用画图 3</span>
        <span>D 进行编辑</span>
      </BigButton>
    </PaintGroup>

    <PaintGroup width="w-8" label="">
      <BigButton
        width="w-[30px]"
        icon={
          <Icon className="w-5 h-5" box="0 0 20 20">
            <circle cx="10" cy="10" r="10" fill="#0078d7" />
            <circle cx="10" cy="5" r="1.200" fill="#fff" />
            <path d="M10 8v8" stroke="#fff" strokeWidth="1.800" />
          </Icon>
        }
      >
        <span>产品</span>
        <span>提醒</span>
      </BigButton>
    </PaintGroup>
  </div>
);

const PaintCanvas = () => (
  <div className="flex-1 min-h-0 pl-0.5 pt-0.5 overflow-hidden bg-linear-to-b from-[#c4cede] to-[#dce6f2]">
    <div className="relative w-[392px] h-[266px] bg-white shadow-[3px_3px_2px_#b5c2d4]">
      <svg viewBox="0 0 392 266" className="w-full h-full" fill="none" stroke="#000" strokeWidth="2.500">
        <path d="M107.500 48L154 108l-46.500 59L61.500 108z" />
        <path d="M216.500 104H269V74l52.500 60L269 194v-30h-52.500z" />
      </svg>
      <span className="absolute -right-[3px] top-1/2 w-[3px] h-[3px] bg-white border border-[#777]" />
      <span className="absolute -right-[3px] -bottom-[3px] w-[3px] h-[3px] bg-white border border-[#777]" />
      <span className="absolute left-1/2 -bottom-[3px] w-[3px] h-[3px] bg-white border border-[#777]" />
    </div>
  </div>
);

const PaintStatus = () => (
  <div className="h-4 flex items-center shrink-0 bg-[#f0f0f0] text-[#333]">
    <div className="w-[114px] h-full flex items-center pl-0.5 border-r border-[#dcdcdc]">
      <Icon className="w-[9px] h-[9px]"><path d="M8 1v14M1 8h14M6 3l2-2 2 2M6 13l2 2 2-2M3 6L1 8l2 2M13 6l2 2-2 2" stroke="#4a5f78" strokeWidth="1.500" /></Icon>
    </div>
    <div className="w-[114px] h-full flex items-center pl-0.5 border-r border-[#dcdcdc]">
      <Icon className="w-[10px] h-[10px]"><path d="M2 3h12v10H2z" stroke="#6d8299" strokeWidth="1.500" strokeDasharray="2 1" /><path d="M0 2h4v3H0z" fill="#6d8299" /></Icon>
    </div>
    <div className="w-[114px] h-full flex items-center gap-0.5 pl-0.5 border-r border-[#dcdcdc]">
      <Icon className="w-[10px] h-[10px]"><path d="M3 2h12v11H3z" fill="#dcebf8" stroke="#5d7791" strokeWidth="1.500" /><path d="M0 2h2M0 13h2" stroke="#5d7791" /></Icon>
      <span>762 × 517像素</span>
    </div>
    <div className="w-[115px] h-full border-r border-[#dcdcdc]" />
    <div className="w-[88px] h-full border-r border-[#dcdcdc]" />
    <div className="flex items-center pl-[9px]">
      <span>100%</span>
      <button aria-label="缩小" className="ml-1"><Icon className="w-[11px] h-[11px]"><circle cx="8" cy="8" r="7" fill="#f7f7f7" stroke="#888" /><path d="M4 8h8" stroke="#444" strokeWidth="1.500" /></Icon></button>
      <input
        type="range"
        aria-label="缩放"
        defaultValue="50"
        className="w-[62px] h-[11px] mx-[3px] appearance-none bg-transparent [&::-webkit-slider-runnable-track]:h-[3px] [&::-webkit-slider-runnable-track]:bg-[#e2e2e2] [&::-webkit-slider-thumb]:appearance-none [&::-webkit-slider-thumb]:w-[6px] [&::-webkit-slider-thumb]:h-[11px] [&::-webkit-slider-thumb]:-mt-1 [&::-webkit-slider-thumb]:bg-[#1b7fd4]"
      />
      <button aria-label="放大"><Icon className="w-[11px] h-[11px]"><circle cx="8" cy="8" r="7" fill="#f7f7f7" stroke="#bbb" /><path d="M4 8h8M8 4v8" stroke="#333" strokeWidth="1.800" /></Icon></button>
    </div>
  </div>
);

const PaintWindow = () => (
  <div className="absolute left-[45px] top-[63px] right-[136px] bottom-[49px] flex flex-col bg-white border border-[#6fb0e2]">
    <PaintTitle />
    <div className="h-[15px] shrink-0 flex">
      <button className="w-9 bg-[#1979ca] text-white">文件</button>
      <button className="w-8 h-4 z-10 bg-[#f5f6f7] border-x border-t border-[#dadbdc] text-[#333]">主页</button>
      <button className="w-[34px] text-[#333]">查看</button>
      <div className="ml-auto flex items-center gap-[5px] pr-0.5">
        <Icon className="w-2 h-2"><path d="M2 11l6-6 6 6" stroke="#999" strokeWidth="1.600" /></Icon>
        <button aria-label="帮助" className="w-[9px] h-[9px] rounded-full bg-[#0b72cc] text-white text-[7px] leading-[9px] font-bold">?</button>
      </div>
    </div>
    <PaintRibbon />
    <PaintCanvas />
    <PaintStatus />
  </div>
);

/* ---------- Taskbar ---------- */

const Taskbar = () => (
  <div className="h-[26px] shrink-0 flex bg-[#060b13] text-white">
    <button aria-label="开始" className="w-[30px] flex items-center justify-center">
      <Icon className="w-[11px] h-[11px]"><path d="M0 2l7-1v6.500H0zM8 1l8-1v7.500H8zM0 8.500h7V15l-7-1zM8 8.500h8V16l-8-1z" fill="#fff" /></Icon>
    </button>
    <button aria-label="搜索" className="w-8 flex items-center justify-center">
      <Icon className="w-[11px] h-[11px]"><circle cx="8" cy="8" r="6.500" stroke="#fff" strokeWidth="2.300" /></Icon>
    </button>
    <button aria-label="任务视图" className="w-[30px] flex items-center justify-center">
      <Icon className="w-[11px] h-[11px]"><path d="M1 0v3h9V0M1 16v-3h9v3M1 5h9v6H1zM14 0v2M14 5v3M14 10v6" stroke="#ddd" strokeWidth="1.300" /></Icon>
    </button>
    <button aria-label="浏览器" className="w-[40px] flex items-center pl-[11px] gap-1.5">
      <Icon className="w-[13px] h-[13px]">
        <path d="M13.500 11c-1 2-3 3-5 3A5.500 5.500 0 118.500 3c3 0 5 2 5 5.500H5" stroke="#2a8df4" strokeWidth="2.500" />
        <path d="M1 14c-2-3 6-13 13-13 2 0 1 3 0 4" stroke="#1e7fdc" strokeWidth="1.200" />
      </Icon>
      <Icon className="w-1 h-1"><path d="M2 0v16l12-8z" fill="#2a9df4" /></Icon>
    </button>
    <button aria-label="Word" className="w-[25px] flex items-center justify-center border-b-2 border-[#76b9ed]">
      <Icon className="w-[15px] h-[15px]"><path d="M1 1h14v14H4z" fill="#f2f6fc" /><path d="M0 1l11-1v13L1 12z" fill="#2b5db0" /><path d="M2 4l1.500 6L5.500 5l2 5L9 4" stroke="#fff" strokeWidth="1.400" /><path d="M12 4h2M12 7h2M12 10h2M5 13.500h9" stroke="#7fa0d6" /></Icon>
    </button>
    <button aria-label="Excel" className="w-[26px] ml-1.5 flex items-center justify-center border-b-2 border-[#76b9ed]">
      <Icon className="w-[15px] h-[15px]"><path d="M1 1h14v14H4z" fill="#eef7ea" /><path d="M0 1l11-1v13L1 12z" fill="#4aa845" /><path d="M3 3.500l5 6M8 3.500l-5 6" stroke="#fff" strokeWidth="1.800" /><path d="M12 4h2M12 7h2M12 10h2M6 13.500h8" stroke="#5fb36a" /></Icon>
    </button>
    <button aria-label="画图" className="w-[31px] ml-1 flex items-center justify-center bg-[#3a3f46] border-b-2 border-[#76b9ed]">
      <PaletteIcon className="w-[15px] h-[15px]" />
    </button>
    <div className="ml-auto flex items-center pr-[9px]">
      <Icon className="w-[9px] h-[9px]"><path d="M1 11l7-7 7 7" stroke="#ddd" strokeWidth="1.600" /></Icon>
      <Icon className="w-[11px] h-[11px] ml-1.5"><circle cx="8" cy="8" r="7.500" fill="#efd914" /><path d="M1 10a7.500 7.500 0 007-9.500A7.500 7.500 0 001 10z" fill="#2ca53c" /><path d="M8 15.500A7.500 7.500 0 0015 6c-5 1-7 4-7 9.500z" fill="#2ca53c" /><path d="M8 5v6M5 8h6" stroke="#fff" strokeWidth="2" /></Icon>
      <Icon className="w-[11px] h-[11px] ml-[5px]"><path d="M4 3h11v8H6M2 1v8M0 3h4M7 14h6M10 11v3" stroke="#ddd" strokeWidth="1.300" /></Icon>
      <Icon className="w-[11px] h-[11px] ml-1"><path d="M1 6h3l4-4v12l-4-4H1zM11 6l4 4M15 6l-4 4" stroke="#ddd" strokeWidth="1.300" /></Icon>
      <span className="ml-[7px] text-[#ddd]">中</span>
      <Icon className="w-[10px] h-[10px] ml-[9px]"><path d="M1 1l14-1v15L0 16z" fill="#ef4423" /><path d="M12 4C8 3 4 4 5 6.500S12 8 11 11s-5 1.500-7 .5" stroke="#fff" strokeWidth="2" /></Icon>
      <span className="w-[14px] h-[14px] ml-3 rounded-full bg-[#12c25b] border border-[#3be083] text-center leading-[12px]">60</span>
      <div className="w-[56px] ml-3 text-center leading-[10px]">
        <p>18:48 周六</p>
        <p>2020/12/26</p>
      </div>
      <Icon className="w-4 h-4 ml-[18px]"><path d="M1 2h11v9H6l-2 2v-2H1z" fill="#fff" /><path d="M3 4.500h7M3 7h7" stroke="#333" /><path d="M8 8h7v7H8z" fill="#2e4361" stroke="#8598b3" /><path d="M10 10h3v1.500h-3V13h3" stroke="#fff" /></Icon>
      <Icon className="w-4 h-4 ml-2.5"><path d="M0 1h12v9H7l-2 2.500V10H0z" fill="#fff" /><path d="M2 4h8M2 7h8" stroke="#333" /><circle cx="11.500" cy="11" r="4.300" fill="#333a44" stroke="#8b8f95" /><path d="M10.500 9.500l1-1v5" stroke="#fff" strokeWidth="1.200" /></Icon>
    </div>
  </div>
);

const Watermark = () => (
  <div className="absolute right-[46px] bottom-[19px] w-[154px] pointer-events-none font-['Liberation_Sans','Noto_Sans_CJK_SC',sans-serif] text-white/85 [text-shadow:0_0_1px_#a3acb8]">
    <div className="flex items-end h-[54px]">
      <span className="text-[33px] leading-[32px] font-bold">Bai</span>
      <div className="relative w-12 h-[54px]">
        <svg viewBox="0 0 48 54" className="w-full h-full" fill="#fff" fillOpacity=".85" stroke="#d3d7dc">
          <ellipse cx="7" cy="24" rx="5" ry="7" transform="rotate(-15 7 24)" />
          <ellipse cx="18" cy="13" rx="5" ry="8" />
          <ellipse cx="32" cy="14" rx="5" ry="8" transform="rotate(10 32 14)" />
          <ellipse cx="42" cy="26" rx="5" ry="7" transform="rotate(20 42 26)" />
          <path d="M24 25c7 0 9 8 14 12 6 6 3 15-4 15-4 0-6-1-10-1s-7 1-11 1c-8 0-10-9-5-14 6-5 9-13 16-13z" />
        </svg>
        <span className="absolute left-3 bottom-1 text-[20px] leading-[20px] font-bold text-[#cdd4dd] [text-shadow:none]">du</span>
      </div>
      <span className="text-[26px] leading-[32px] font-bold">经验</span>
    </div>
    <p className="text-[19px] leading-[20px]">jingyan.baidu.com</p>
  </div>
);

const App = () => (
  <main className="relative h-screen min-w-0 flex flex-col overflow-hidden bg-white font-['Open_Sans','Noto_Sans_CJK_SC',sans-serif] text-[8px] leading-[12px]">
    <ExcelTitle />
    <ExcelTabs />
    <ExcelRibbon />
    <FormulaBar />
    <Sheet />
    <SheetBar />
    <ExcelStatus />
    <Taskbar />

    <span className="absolute left-[19px] top-[399px] w-7 border-t border-[#999]" />
    <PaintWindow />
    <svg viewBox="0 0 90 110" className="absolute right-[43px] top-[144px] w-[90px] h-[110px]" fill="none" stroke="#fe0000" strokeWidth="4">
      <path d="M2 58L40 6l2 25 42-4 3 50-42 3 3 25z" />
    </svg>
    <Watermark />
  </main>
);

export default App;
